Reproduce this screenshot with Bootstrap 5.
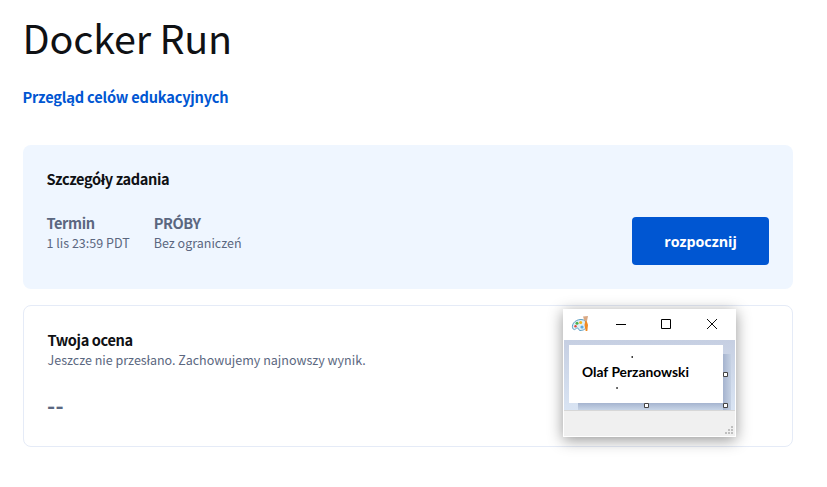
<!DOCTYPE html>
<html lang="pl">
<head>
<meta charset="utf-8">
<meta name="viewport" content="width=device-width, initial-scale=1">
<title>Docker Run</title>
<link href="https://cdn.jsdelivr.net/npm/bootstrap@5.3.0/dist/css/bootstrap.min.css" rel="stylesheet">
<style>
body{font-family:"Noto Sans CJK SC","Noto Sans",sans-serif;font-size:14.6px;line-height:20px;color:#0f1114;background:#fff;overflow:hidden}
.page-wrap{width:793px;padding:13px 0 0 23px}
h1{font-size:39.5px;line-height:48px;font-weight:400;letter-spacing:-.2px;margin:0 0 26px -.5px}
.goals{font-size:14.6px;line-height:20px;color:#0056d2;letter-spacing:-.19px;margin-left:-.5px}
.panel{border-radius:8px}
.details{height:144px;margin-top:38px;padding:24px 24px 24px 23.500px;background:#eff6ff}
.grade{height:142px;margin-top:16px;padding:24px 24px 24px 23.500px;border:1px solid #e5ebf7}
h2{font-size:14.6px;line-height:20px;letter-spacing:-.4px;margin:0}
.soft{color:#5b6780}
.meta-label{letter-spacing:-.42px}
.meta-line{font-size:12.53px;line-height:20px}
.score{font-size:22px;line-height:20px;letter-spacing:.3px;margin-left:-.5px}
.start{width:137px;height:48px;margin-top:28px;background:#0056d2;font-family:"Open Sans",sans-serif;font-size:14.300px;padding:2px 0 0}
.paint{left:563px;top:309px;width:173px;height:128px;background:#fff;box-shadow:0 3px 14px rgba(0,0,0,.42);border:1px solid #fff}
.titlebar{height:30px}
.titlebar svg,.canvas-area svg,.statusbar svg{display:block}
.canvas-area{height:70px;background:linear-gradient(#c6cfe2,#d9e4f3)}
.statusbar{height:26px;background:#f0f0f0;border-top:1px solid #d7d7d7}
</style>
<script src="https://cdn.jsdelivr.net/npm/bootstrap@5.3.0/dist/js/bootstrap.bundle.min.js"></script>
</head>
<body>
<main class="page-wrap">
  <h1>Docker Run</h1>
  <a href="#" class="goals d-block fw-bold text-decoration-none">Przegląd celów edukacyjnych</a>
  <section class="panel details">
    <h2 class="fw-bold">Szczegóły zadania</h2>
    <div class="d-flex justify-content-between align-items-start">
      <div class="d-flex gap-4 pt-4 soft">
        <div><div class="fw-bold meta-label">Termin</div><div class="meta-line">1 lis 23:59 PDT</div></div>
        <div><div class="fw-bold meta-label">PRÓBY</div><div class="meta-line">Bez ograniczeń</div></div>
      </div>
      <button type="button" class="btn btn-primary start fw-bold border-0 rounded-1">rozpocznij</button>
    </div>
  </section>
  <section class="panel grade">
    <h2 class="fw-bold">Twoja ocena</h2>
    <div class="meta-line soft">Jeszcze nie przesłano. Zachowujemy najnowszy wynik.</div>
    <div class="fw-bold soft score mt-4">--</div>
  </section>
</main>
<aside class="paint position-absolute">
  <div class="titlebar">
    <svg width="171" height="30" viewBox="564 310 171 30">
      <path d="M573.200 329c-2.500-3 .8-9.500 7.800-9.500 3.500 0 5.500 2 5.500 5.500 0 4-3 5.500-6.500 5.500-1.500 0-1-2.500-2.700-2.500-1.600 0-2.300 2.800-4.100 1z" fill="#dceff8" stroke="#5d9fc4"/>
      <circle cx="577" cy="323.200" r="1.500" fill="#4caf50"/><circle cx="580.700" cy="322.500" r="1.500" fill="#f5b51f"/><circle cx="575.500" cy="326.300" r="1.200" fill="#e2493b"/><circle cx="582" cy="327" r="1.600" fill="#5fa9dc"/>
      <path d="M585.300 321h1.400l1.300 4-.7 6h-1.600l-1.200-6z" fill="#f08a24"/><path d="M583 316.500l5-.5-1 5h-2.500z" fill="#d9a883"/>
      <path d="M616 324.500h10M661.500 319.500h9v9h-9z" fill="none" stroke="#000"/><path d="M707 319l10 10M717 319l-10 10" fill="none" stroke="#000" stroke-width=".95"/>
    </svg>
  </div>
  <div class="canvas-area">
    <svg width="171" height="70" viewBox="564 340 171 70">
      <defs><linearGradient id="sh" x1="0" y1="0" x2="0" y2="1"><stop offset="0" stop-color="#a5b4cf"/><stop offset="1" stop-color="#c8d5e7"/></linearGradient>
      <linearGradient id="sr"><stop offset="0" stop-color="#a5b3ce"/><stop offset="1" stop-color="#c5d1e3"/></linearGradient></defs>
      <path d="M578 403h153v7H578z" fill="url(#sh)"/><path d="M723 354h8v56h-8z" fill="url(#sr)"/>
      <path d="M569 345h154v58H569z" fill="#fff"/>
      <text x="582" y="377" font-family="Lato, sans-serif" font-weight="700" font-size="13.600" textLength="107" lengthAdjust="spacingAndGlyphs">Olaf Perzanowski</text>
      <path d="M631.500 356.200h1.500v1.500h-1.500zM616.300 387.200h1.500v1.500h-1.500z"/>
      <path d="M723.500 372.500h4v4h-4zM644.500 403.500h4v4h-4zM723.500 403.500h4v4h-4z" fill="#fff" stroke="#444"/>
    </svg>
  </div>
  <div class="statusbar">
    <svg width="171" height="25" viewBox="564 411 171 25"><path d="M731 426h2v2h-2zM728 429h2v2h-2zM731 429h2v2h-2zM725 432h2v2h-2zM728 432h2v2h-2zM731 432h2v2h-2z" fill="#bfbfbf"/></svg>
  </div>
</aside>
</body>
</html>
